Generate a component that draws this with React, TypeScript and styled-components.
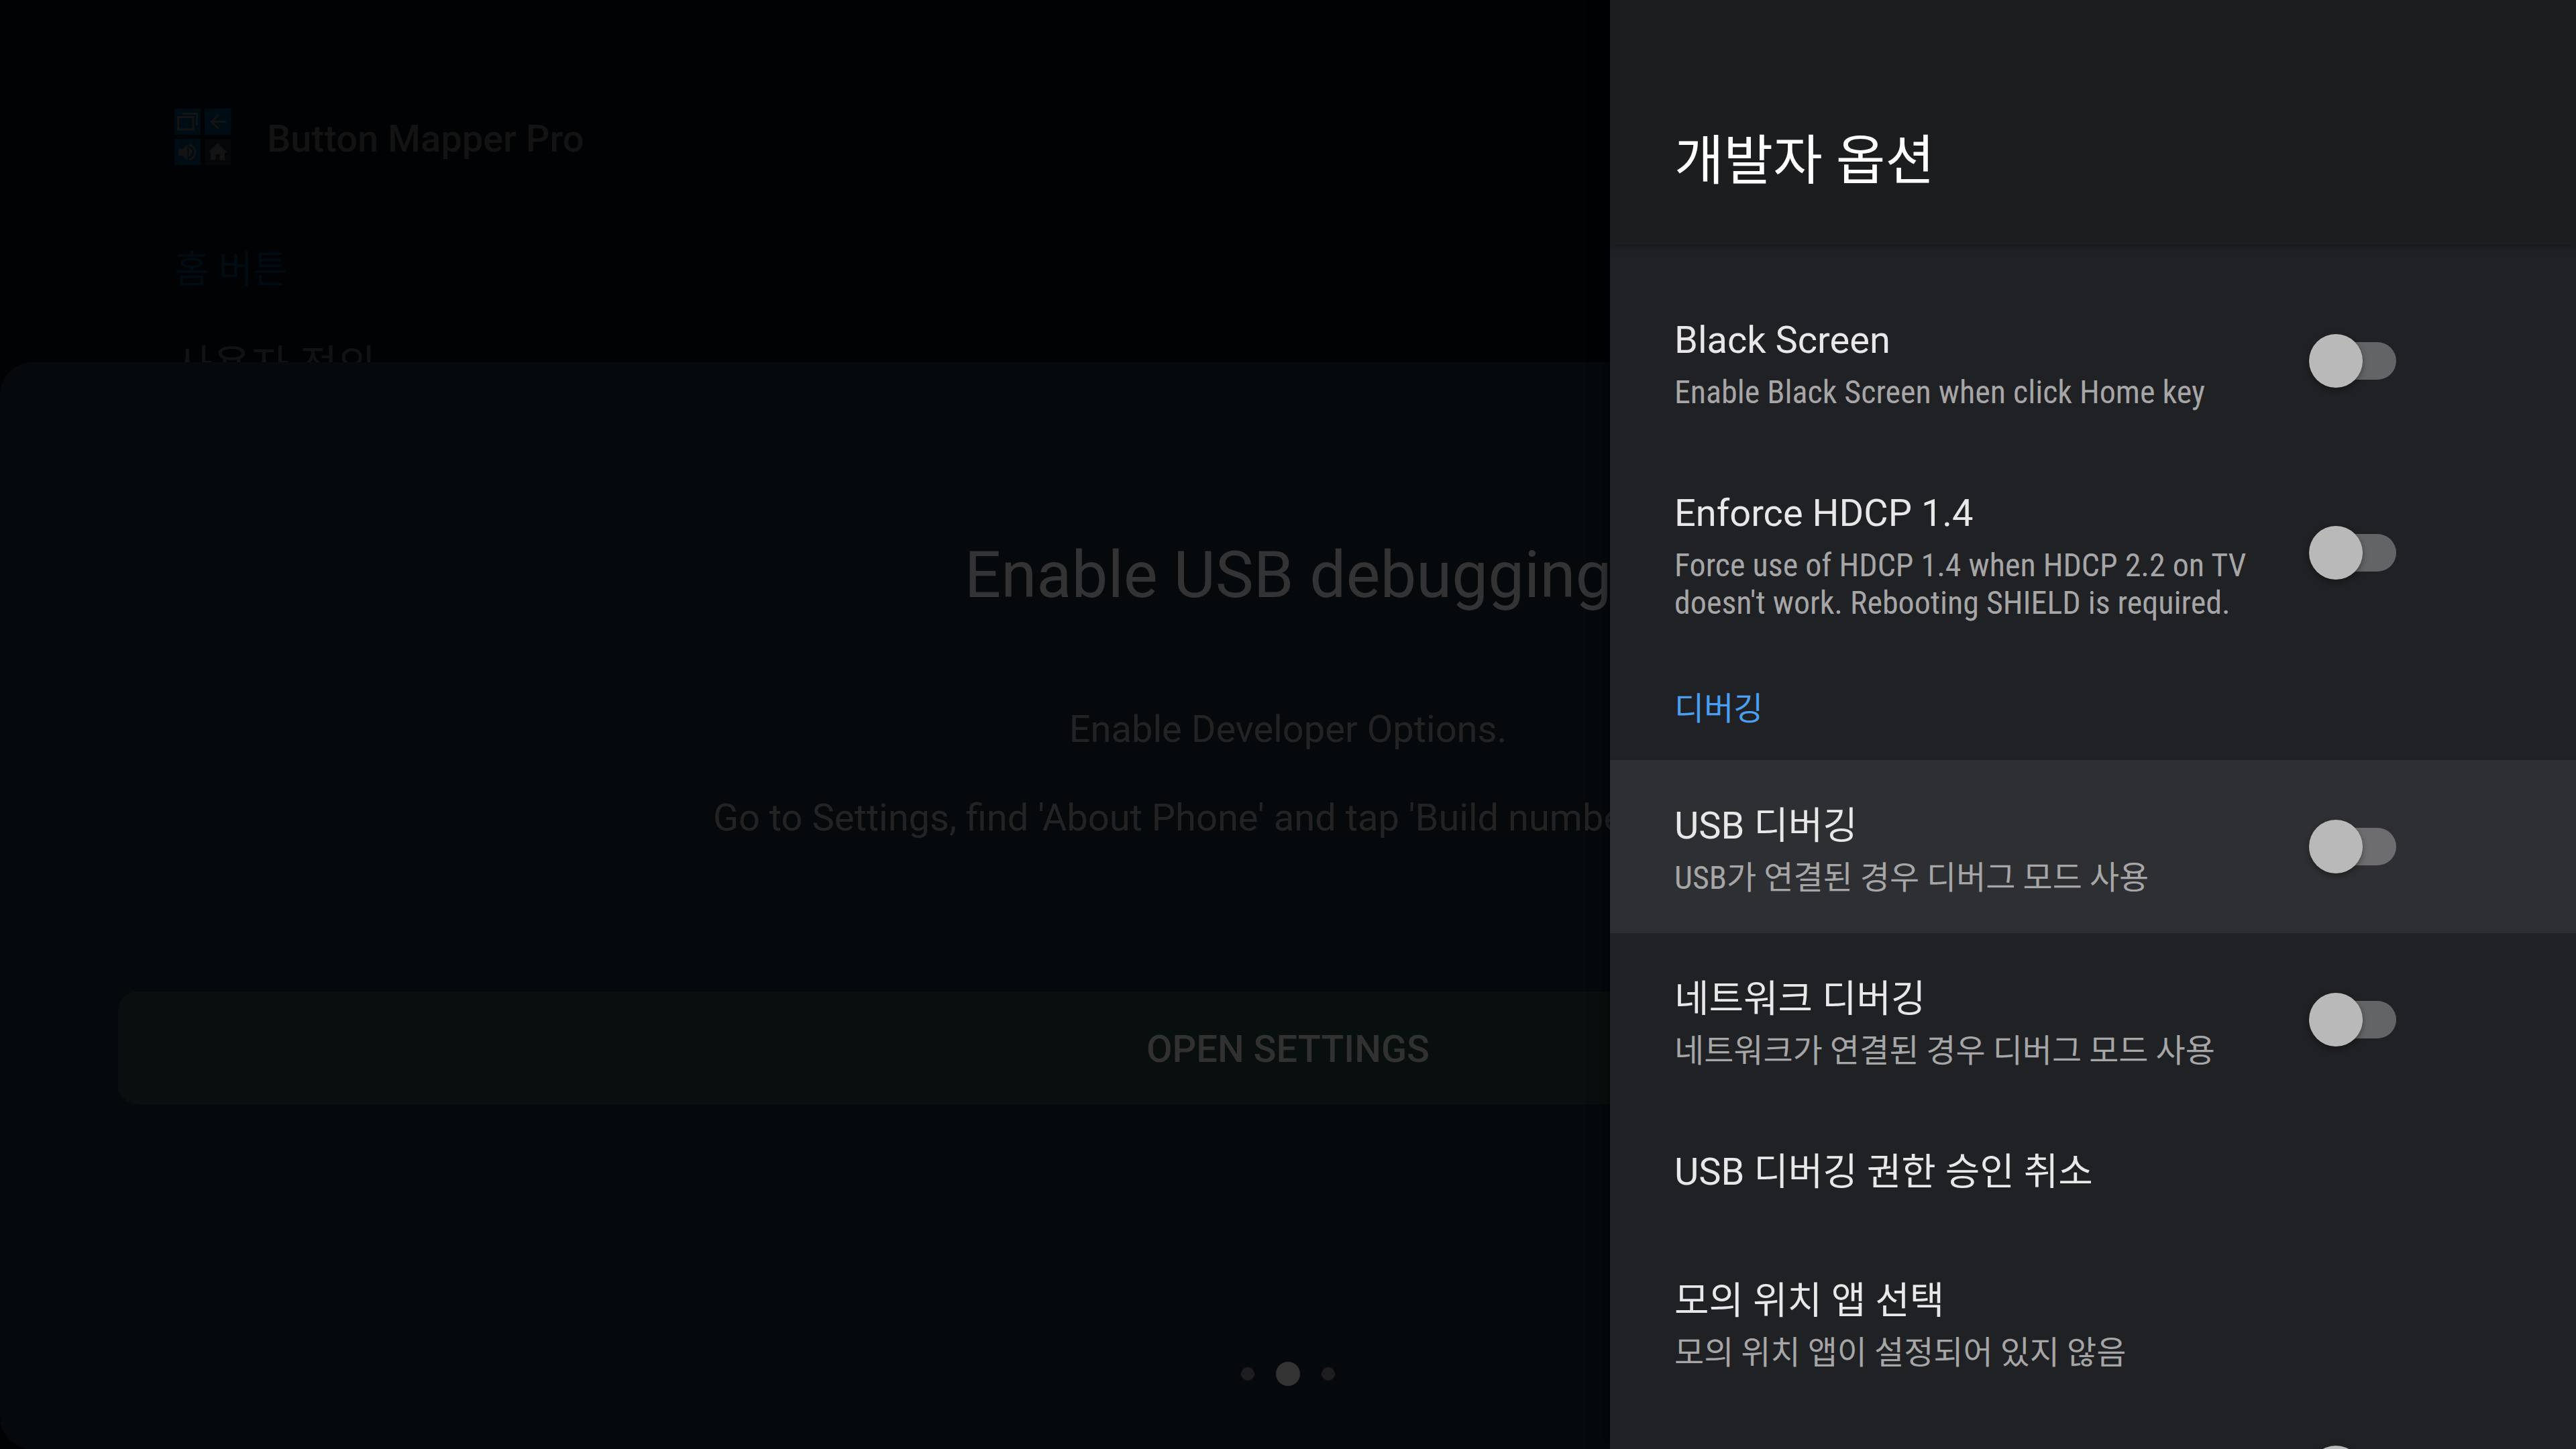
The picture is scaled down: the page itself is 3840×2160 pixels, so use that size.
import React from 'react';
import styled, { createGlobalStyle, css } from 'styled-components';

const GlobalStyle = createGlobalStyle`
  *, *::before, *::after { box-sizing: border-box; }
  html, body { height: 100%; }
  body {
    margin: 0;
    overflow: hidden;
    background: #010204;
    font-family: Roboto, "Noto Sans CJK KR", sans-serif;
  }
  #root { height: 100%; }
  h1, h2, h3, p { margin: 0; padding: 0; font-weight: 400; }
`;

const Screen = styled.div`
  position: relative;
  height: 100%;
  overflow: hidden;
`;

const Backdrop = styled.main`
  display: flex;
  flex-direction: column;
  height: 100%;
`;

const AppBehind = styled.section`
  flex: none;
  height: 540px;
  padding: 156px 260px 0;
  overflow: hidden;
`;

const AppBar = styled.header`
  display: flex;
  align-items: center;
  gap: 54px;
  height: 96px;
`;

const AppTitle = styled.h1`
  padding-top: 6px;
  font-size: 56px;
  line-height: 64px;
  font-weight: 500;
  color: #131313;
`;

const AppSection = styled.h2`
  margin-top: 110px;
  font-size: 56px;
  line-height: 80px;
  color: #000c13;
`;

const AppEntry = styled.p`
  margin-top: 60px;
  font-size: 62px;
  line-height: 88px;
  color: #121212;
`;

const Sheet = styled.section`
  flex: 1;
  display: flex;
  flex-direction: column;
  align-items: center;
  padding: 257px 176px 94px;
  border-radius: 48px;
  background: #05090c;
`;

const SheetTitle = styled.h2`
  font-size: 96px;
  line-height: 120px;
  color: #333333;
`;

const SheetCopy = styled.div`
  margin-top: 104px;
`;

const SheetText = styled.p`
  font-size: 56px;
  line-height: 132px;
  color: #232323;
  text-align: center;
  white-space: nowrap;
`;

const OpenButton = styled.button`
  align-self: stretch;
  margin-top: 193px;
  height: 168px;
  padding: 4px 0 0;
  border: 0;
  border-radius: 28px;
  background: #090f0e;
  color: #313131;
  font: 500 56px/64px Roboto, sans-serif;
`;

const Dots = styled.div`
  display: flex;
  align-items: center;
  gap: 32px;
  margin-top: auto;
`;

const Dot = styled.span<{ $active?: boolean }>`
  width: ${p => (p.$active ? 36 : 20)}px;
  height: ${p => (p.$active ? 36 : 20)}px;
  border-radius: 50%;
  background: ${p => (p.$active ? '#333333' : '#1e1e20')};
`;

const Panel = styled.aside`
  position: absolute;
  top: 0;
  right: 0;
  bottom: 0;
  width: 37.5%;
  display: flex;
  flex-direction: column;
  background: #202124;
  box-shadow: 0 0 24px rgba(0, 0, 0, 0.6);
  overflow: hidden;
`;

const PanelHeader = styled.header`
  flex: none;
  height: 364px;
  padding: 180px 96px 0;
  background: #1c1d1e;
  box-shadow: 0 2px 10px rgba(0, 0, 0, 0.35);
`;

const PanelTitle = styled.h2`
  font-size: 80px;
  line-height: 120px;
  color: #ffffff;
`;

const PanelList = styled.div`
  flex: none;
  padding-top: 45px;
`;

const rowBox = css<{ $focused?: boolean }>`
  display: flex;
  align-items: center;
  justify-content: space-between;
  width: 100%;
  padding: 54px 268px 54px 96px;
  border: 0;
  background: ${p => (p.$focused ? '#2e2f32' : 'transparent')};
  font-family: inherit;
  text-align: left;
`;

const SwitchRow = styled.label<{ $focused?: boolean }>`${rowBox}`;
const ActionRow = styled.button`${rowBox}`;

const RowText = styled.span`
  display: flex;
  flex-direction: column;
  gap: 10px;
  width: 880px;
`;

const RowTitle = styled.span`
  min-height: 84px;
  padding-top: 4px;
  font-size: 56px;
  line-height: 80px;
  color: #e8e8e8;
`;

const RowSummary = styled.span`
  font-family: "Roboto Condensed", Roboto, "Noto Sans CJK KR", sans-serif;
  font-size: 48px;
  line-height: 56px;
  color: #a6a6a7;
`;

const GroupTitle = styled.h3`
  padding: 40px 96px;
  font-size: 48px;
  line-height: 72px;
  color: #4a9ff0;
`;

const Switch = styled.input`
  appearance: none;
  flex: none;
  display: flex;
  align-items: center;
  margin: 0;
  width: 130px;
  height: 80px;

  &::before {
    content: "";
    flex: none;
    z-index: 1;
    width: 80px;
    height: 80px;
    border-radius: 50%;
    background: #b9b9b9;
    box-shadow: 0 4px 8px rgba(0, 0, 0, 0.35);
  }

  &::after {
    content: "";
    flex: none;
    width: 100px;
    height: 56px;
    margin-left: -50px;
    border-radius: 28px;
    background: rgba(255, 255, 255, 0.3);
  }
`;

function LogoIcon() {
  return (
    <svg width="84" height="84" viewBox="0 0 84 84" aria-hidden="true">
      <path fill="#000c13" d="M0 0h39v39H0zM45 0h39v39H45zM0 45h39v39H0z" />
      <path fill="#050607" d="M45 45h39v39H45z" />
      <path
        fill="none"
        stroke="#131313"
        strokeWidth="3"
        d="M5.5 12.5h22.500v18.500H5.500zM12 7.500h21.500V24M77 19.500H55M66 9L55 19.500 66 30"
      />
      <path fill="#131313" d="M6 60h6l7.500-7.500v25L12 70H6zM21 57c7 3 7 12 0 15z" />
      <path fill="none" stroke="#131313" strokeWidth="3" d="M22 54c12 3 12 19 0 22" />
      <path fill="#131313" d="M64.500 51L78.500 65H75v11.500h-7.500V68h-6v8.500H54V65h-3.500z" />
    </svg>
  );
}

type Item = {
  title?: string;
  summary?: string;
  toggle?: boolean;
  focused?: boolean;
};

const generalItems: Item[] = [
  { title: 'Black Screen', summary: 'Enable Black Screen when click Home key', toggle: true },
  {
    title: 'Enforce HDCP 1.4',
    summary: "Force use of HDCP 1.4 when HDCP 2.2 on TV doesn't work. Rebooting SHIELD is required.",
    toggle: true,
  },
];

const debugItems: Item[] = [
  { title: 'USB 디버깅', summary: 'USB가 연결된 경우 디버그 모드 사용', toggle: true, focused: true },
  { title: '네트워크 디버깅', summary: '네트워크가 연결된 경우 디버그 모드 사용', toggle: true },
  { title: 'USB 디버깅 권한 승인 취소' },
  { title: '모의 위치 앱 선택', summary: '모의 위치 앱이 설정되어 있지 않음' },
  { toggle: true },
];

function Row({ title, summary, toggle, focused }: Item) {
  const text = (
    <RowText>
      <RowTitle>{title}</RowTitle>
      {summary && <RowSummary>{summary}</RowSummary>}
    </RowText>
  );
  if (!toggle) return <ActionRow type="button">{text}</ActionRow>;
  return (
    <SwitchRow $focused={focused}>
      {text}
      <Switch type="checkbox" role="switch" />
    </SwitchRow>
  );
}

export default function App() {
  return (
    <>
      <GlobalStyle />
      <Screen>
        <Backdrop>
          <AppBehind>
            <AppBar>
              <LogoIcon />
              <AppTitle>Button Mapper Pro</AppTitle>
            </AppBar>
            <AppSection>홈 버튼</AppSection>
            <AppEntry>사용자 정의</AppEntry>
          </AppBehind>
          <Sheet>
            <SheetTitle>Enable USB debugging</SheetTitle>
            <SheetCopy>
              <SheetText>Enable Developer Options.</SheetText>
              <SheetText>Go to Settings, find 'About Phone' and tap 'Build number' seven times.</SheetText>
            </SheetCopy>
            <OpenButton type="button">OPEN SETTINGS</OpenButton>
            <Dots>
              <Dot />
              <Dot $active />
              <Dot />
            </Dots>
          </Sheet>
        </Backdrop>
        <Panel>
          <PanelHeader>
            <PanelTitle>개발자 옵션</PanelTitle>
          </PanelHeader>
          <PanelList>
            {generalItems.map((item, i) => <Row key={i} {...item} />)}
            <GroupTitle>디버깅</GroupTitle>
            {debugItems.map((item, i) => <Row key={i} {...item} />)}
          </PanelList>
        </Panel>
      </Screen>
    </>
  );
}
